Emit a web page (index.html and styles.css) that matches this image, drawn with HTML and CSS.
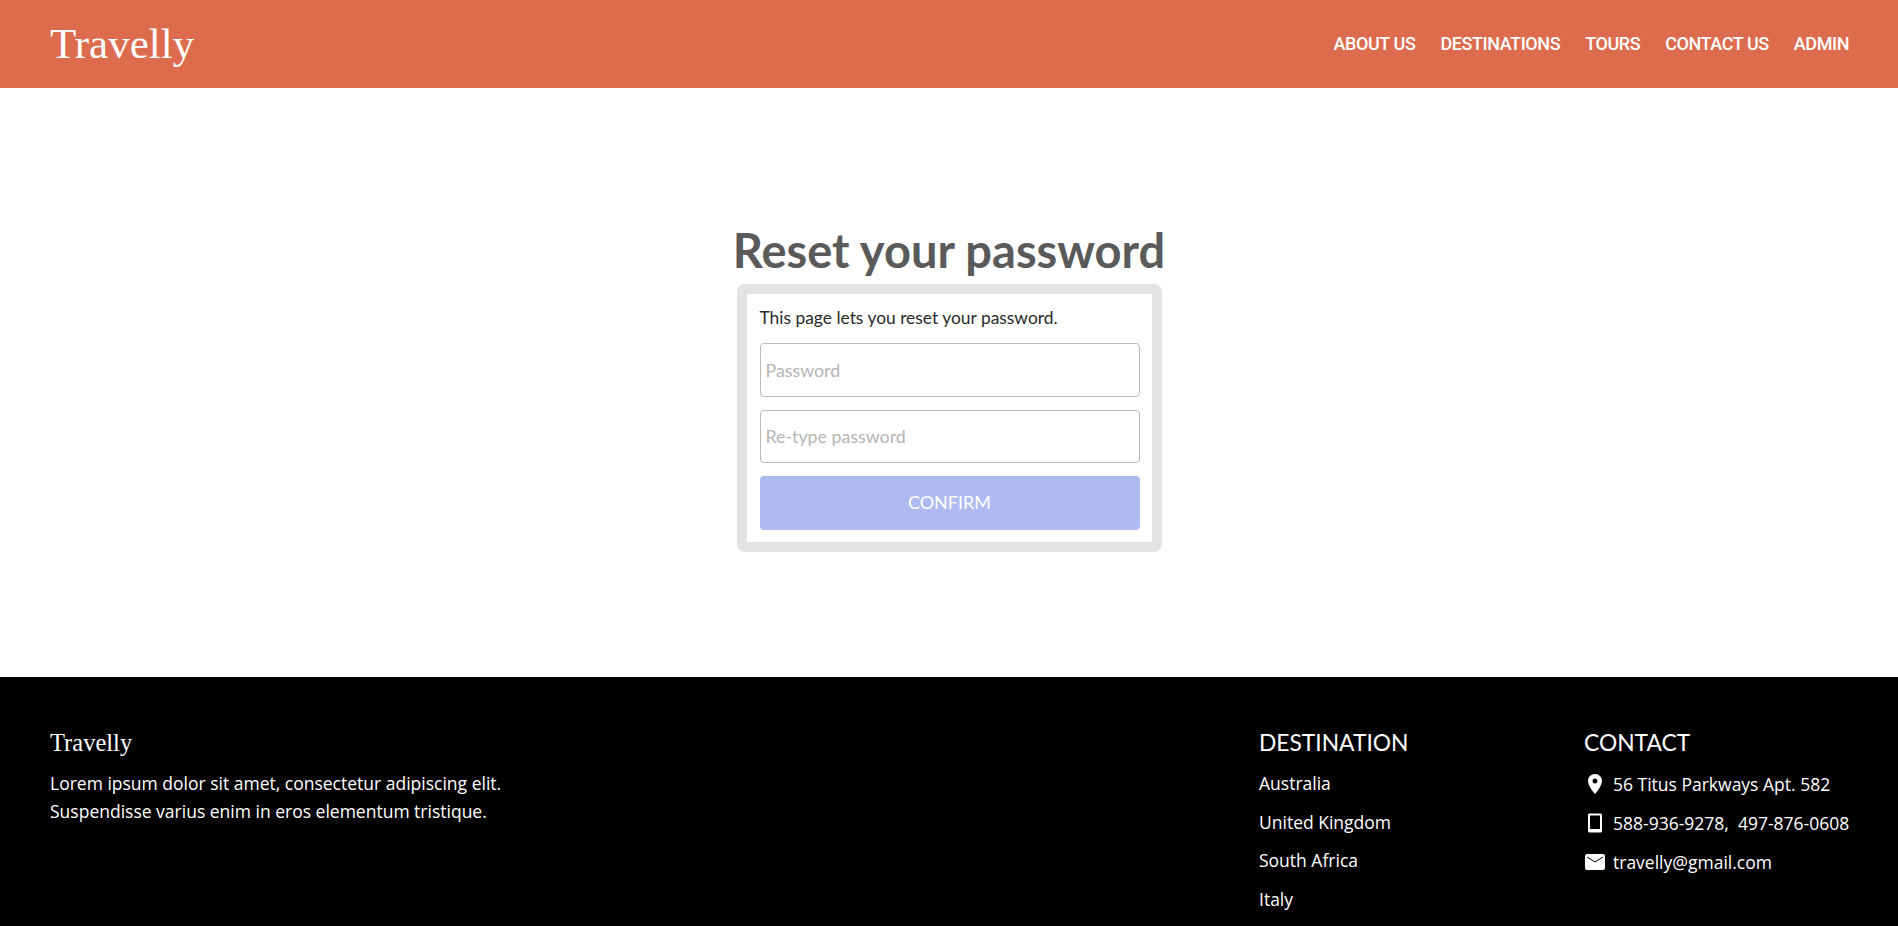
FILE: index.html
```html
<!DOCTYPE html>
<html lang="en">

<head>
  <meta charset="UTF-8">
  <meta name="viewport" content="width=device-width, initial-scale=1.0">
  <title>Travelly - Reset your password</title>
  <link rel="stylesheet" href="styles.css">
</head>

<body>
  <div class="header">
    <a class="logo" href="#">Travelly</a>
    <div class="nav">
      <a href="#">ABOUT US</a>
      <a href="#">DESTINATIONS</a>
      <a href="#">TOURS</a>
      <a href="#">CONTACT US</a>
      <a href="#">ADMIN</a>
    </div>
  </div>

  <div class="main">
    <h1>Reset your password</h1>
    <div class="reset-box">
      <p>This page lets you reset your password.</p>
      <input type="password" placeholder="Password">
      <input type="password" placeholder="Re-type password">
      <button type="button">CONFIRM</button>
    </div>
  </div>

  <div class="footer">
    <div class="footer-about">
      <div class="footer-logo">Travelly</div>
      <p>Lorem ipsum dolor sit amet, consectetur adipiscing elit.<br>Suspendisse varius enim in eros elementum tristique.</p>
    </div>
    <div class="footer-dest">
      <h3>DESTINATION</h3>
      <a href="#">Australia</a>
      <a href="#">United Kingdom</a>
      <a href="#">South Africa</a>
      <a href="#">Italy</a>
    </div>
    <div class="footer-contact">
      <h3>CONTACT</h3>
      <div class="contact-row">
        <svg viewBox="0 0 24 24"><path fill-rule="evenodd" d="M12 2C8.100 2 5 5.100 5 9c0 5.200 7 13 7 13s7-7.800 7-13c0-3.900-3.100-7-7-7zm0 9.500a2.500 2.500 0 1 1 0-5 2.500 2.500 0 0 1 0 5z"/></svg>
        <span>56 Titus Parkways Apt. 582</span>
      </div>
      <div class="contact-row">
        <svg viewBox="0 0 24 24"><path fill-rule="evenodd" d="M6.500 2.500h11c.8 0 1.500.7 1.500 1.500v16c0 .8-.7 1.500-1.500 1.500h-11c-.8 0-1.500-.7-1.500-1.500V4c0-.8.700-1.500 1.500-1.500zM7 4.500V18h10V4.500z"/></svg>
        <span>588-936-9278,&nbsp; 497-876-0608</span>
      </div>
      <div class="contact-row">
        <svg viewBox="0 0 24 24"><path d="M20 4H4c-1.100 0-2 .9-2 2v12c0 1.100.9 2 2 2h16c1.100 0 2-.9 2-2V6c0-1.100-.9-2-2-2zm0 3.500l-8 5-8-5V6.500l8 5 8-5z"/></svg>
        <span>travelly@gmail.com</span>
      </div>
    </div>
  </div>
</body>

</html>
```

FILE: styles.css
```css
/* Travelly reset password page */

html, body {
  height: 100%;
}

body {
  font-family: "Open Sans", sans-serif;
  margin: 0;
  overflow: hidden;
}

a {
  color: #fff;
  text-decoration: none;
}

.header {
  background-color: #dd6c4f;
  height: 88px;
  padding: 0 50px;
  display: flex;
  justify-content: space-between;
  align-items: center;
}

.logo {
  font-family: "Liberation Serif", serif;
  font-size: 43px;
  line-height: 88px;
}

.nav {
  display: flex;
  gap: 25px;
  margin-bottom: 2px;
  margin-right: -1px;
}

.nav a {
  font-family: Roboto, sans-serif;
  font-size: 18px;
  font-weight: 500;
  letter-spacing: -0.42px;
}

.main {
  height: 589px;
  display: flex;
  flex-direction: column;
  align-items: center;
  padding-top: 132px;
  box-sizing: border-box;
}

.main h1 {
  font-family: Lato, sans-serif;
  font-size: 47px;
  font-weight: 700;
  line-height: 60px;
  color: #5a5a5a;
  margin: 0 0 4px;
}

.reset-box {
  width: 425px;
  height: 268px;
  box-sizing: border-box;
  border: 10px solid #e3e3e3;
  border-radius: 8px;
  padding: 12px 12px 12px 13px;
  display: flex;
  flex-direction: column;
  font-family: Lato, sans-serif;
}

.reset-box p {
  margin: 0 0 13px;
  font-size: 17.4px;
  line-height: 24px;
  color: #2a2a2a;
}

.reset-box input {
  height: 53.5px;
  box-sizing: border-box;
  border: 1px solid #b9b9b9;
  border-radius: 4px;
  padding: 0 5px;
  margin-bottom: 13px;
  font-family: Lato, sans-serif;
  font-size: 17.8px;
}

.reset-box input::placeholder {
  color: #b5b5b5;
}

.reset-box button {
  height: 54px;
  border: none;
  border-radius: 4px;
  padding: 0 0 2px;
  background-color: #aebaf1;
  color: #fff;
  font-family: Lato, sans-serif;
  font-size: 18px;
  cursor: pointer;
}

.footer {
  background-color: #000;
  color: #fff;
  height: 249px;
  box-sizing: border-box;
  padding: 51px 50px 0;
  display: flex;
  font-size: 17.5px;
}

.footer-about {
  flex: 1;
}

.footer-logo {
  font-family: "Liberation Serif", serif;
  font-size: 24.5px;
  line-height: 30px;
  margin-bottom: 11px;
}

.footer-about p {
  margin: 0;
  line-height: 28px;
}

.footer-dest {
  width: 325px;
  margin-top: -1px;
  display: flex;
  flex-direction: column;
}

.footer-contact {
  width: 264px;
  margin-top: -1px;
}

.footer h3 {
  font-family: Lato, sans-serif;
  font-size: 22.8px;
  font-weight: 400;
  line-height: 30px;
  margin: 0 0 13px;
}

.footer-contact h3 {
  margin-bottom: 14px;
}

.footer-dest a {
  line-height: 26px;
  margin-bottom: 12.7px;
}

.contact-row {
  display: flex;
  align-items: center;
  gap: 6px;
  line-height: 26px;
  margin-bottom: 13px;
  white-space: nowrap;
}

.contact-row svg {
  flex-shrink: 0;
  width: 24px;
  height: 24px;
  margin-left: -1px;
  fill: #fff;
}
```
